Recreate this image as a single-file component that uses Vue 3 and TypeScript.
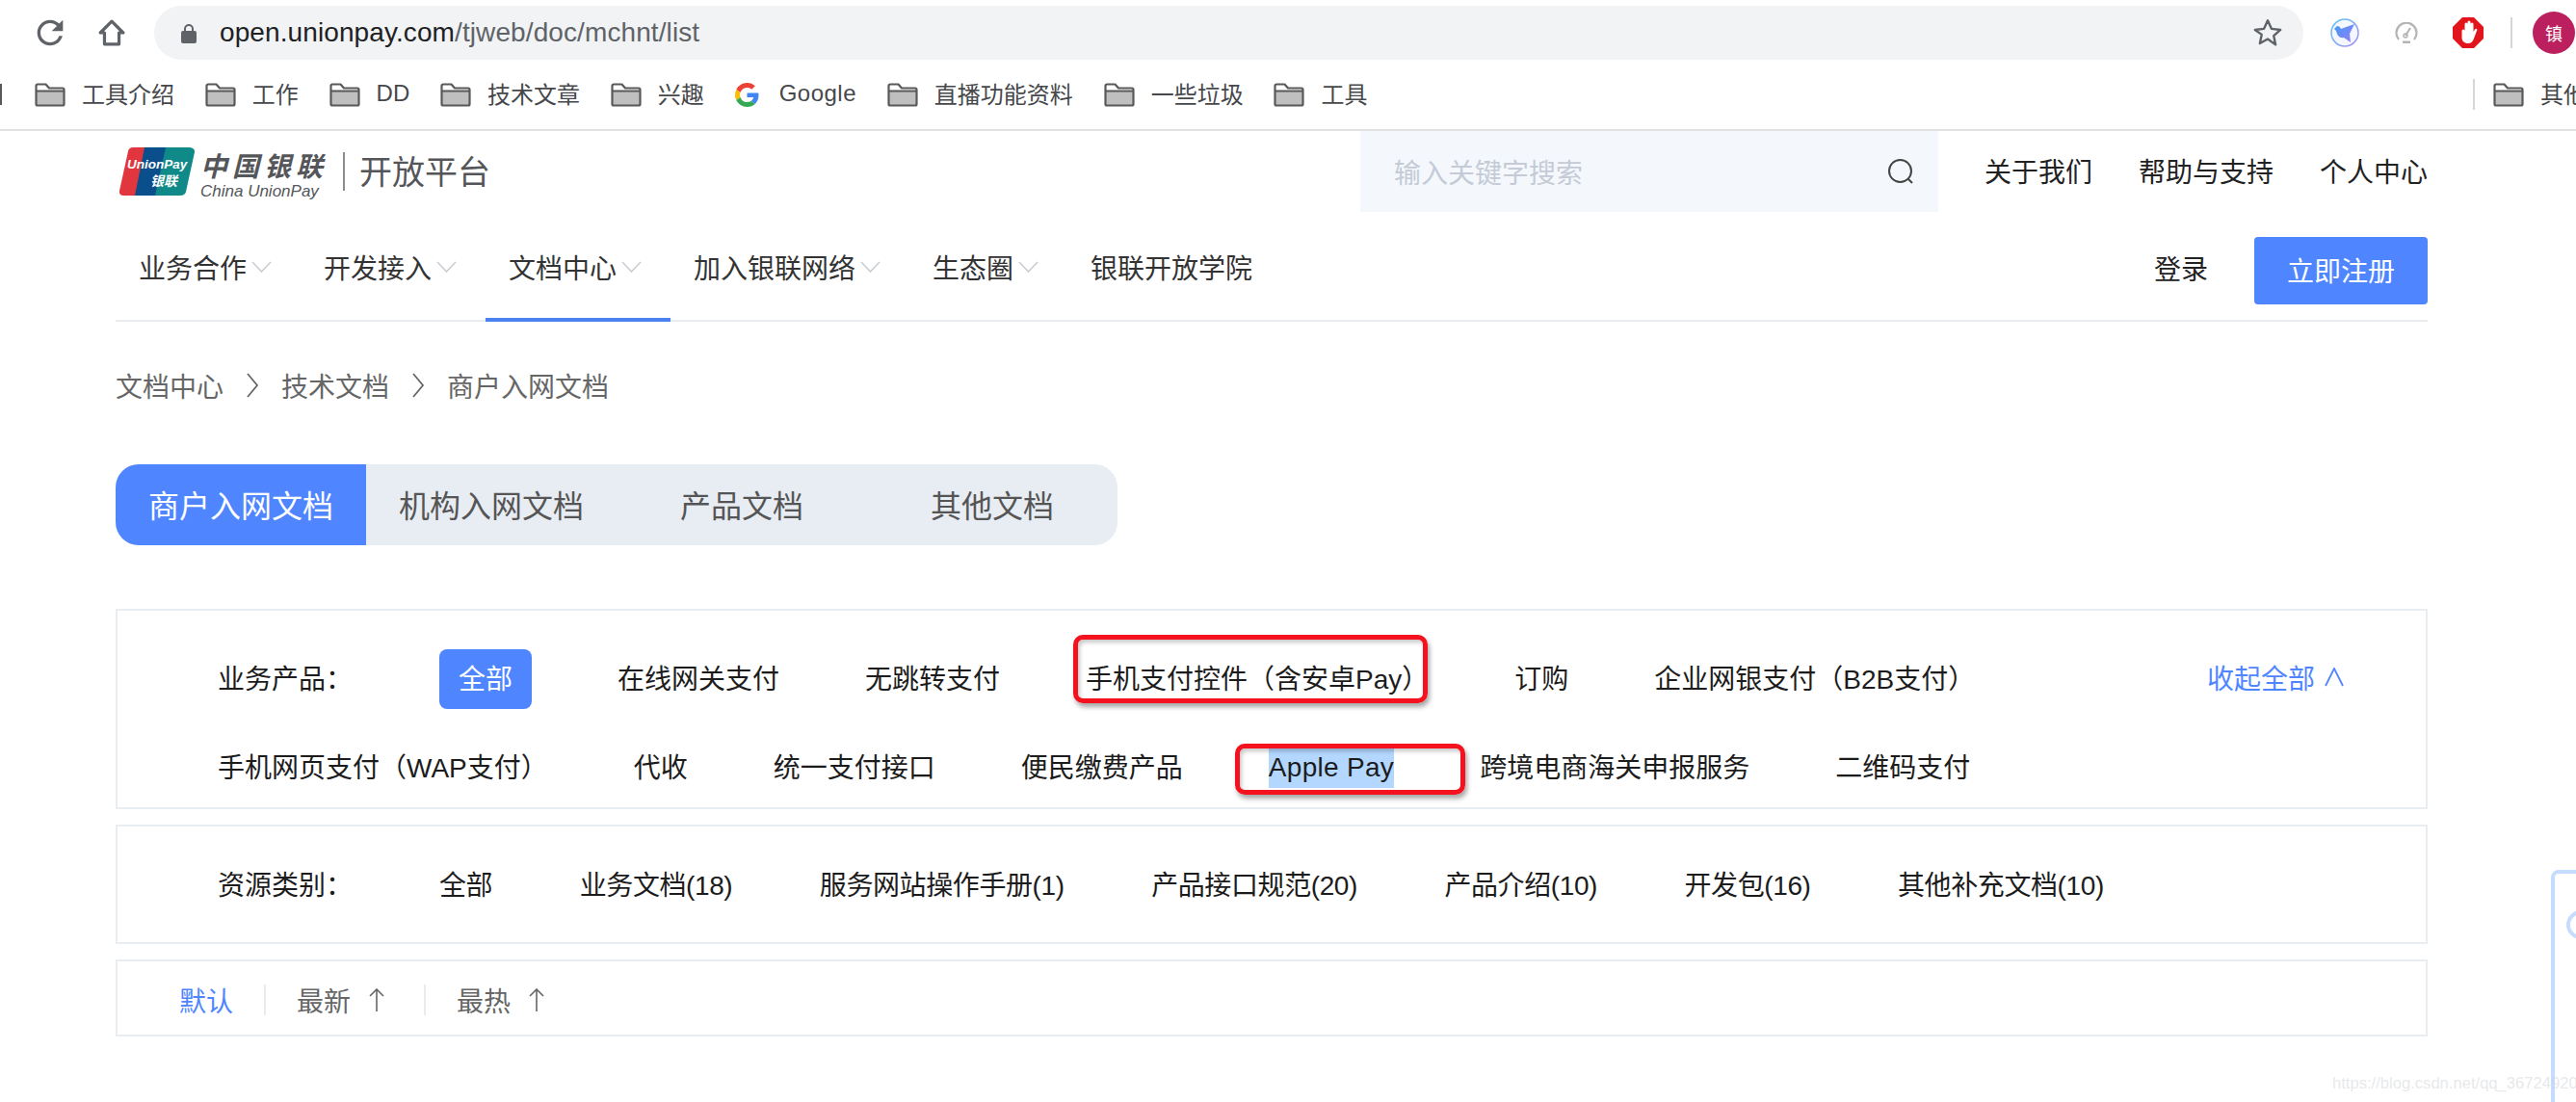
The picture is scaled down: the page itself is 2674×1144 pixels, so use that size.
<script setup lang="ts">
interface Bookmark {
  label: string
  kind: 'folder' | 'google'
}

interface NavItem {
  label: string
  active?: boolean
  arrow?: boolean
}

const bookmarks: Bookmark[] = [
  { label: '工具介绍', kind: 'folder' },
  { label: '工作', kind: 'folder' },
  { label: 'DD', kind: 'folder' },
  { label: '技术文章', kind: 'folder' },
  { label: '兴趣', kind: 'folder' },
  { label: 'Google', kind: 'google' },
  { label: '直播功能资料', kind: 'folder' },
  { label: '一些垃圾', kind: 'folder' },
  { label: '工具', kind: 'folder' },
]

const navItems: NavItem[] = [
  { label: '业务合作', arrow: true },
  { label: '开发接入', arrow: true },
  { label: '文档中心', arrow: true, active: true },
  { label: '加入银联网络', arrow: true },
  { label: '生态圈', arrow: true },
  { label: '银联开放学院' },
]

const tabs = ['商户入网文档', '机构入网文档', '产品文档', '其他文档']

const resourceTypes = [
  '全部',
  '业务文档(18)',
  '服务网站操作手册(1)',
  '产品接口规范(20)',
  '产品介绍(10)',
  '开发包(16)',
  '其他补充文档(10)',
]
</script>

<template>
  <div class="page">
    <!-- browser chrome -->
    <div class="chrome">
      <div class="toolbar">
        <svg class="back" viewBox="0 0 30 30"><path d="M28 15H4M14 5 4 15l10 10" fill="none" stroke="#5f6368" stroke-width="3" /></svg>
        <svg class="reload" viewBox="0 0 24 24"><path fill="#5f6368" d="M17.65 6.35A7.958 7.958 0 0012 4c-4.42 0-7.99 3.58-7.99 8s3.57 8 7.99 8c3.73 0 6.84-2.55 7.73-6h-2.08A5.99 5.99 0 0112 18c-3.31 0-6-2.69-6-6s2.69-6 6-6c1.66 0 3.14.69 4.22 1.78L13 11h7V4l-2.35 2.35z" /></svg>
        <svg class="home" viewBox="0 0 26 26"><path d="M13 2 24 13H20V24H6V13H2Z" fill="none" stroke="#5f6368" stroke-width="3" stroke-linejoin="round" /></svg>
        <div class="omnibox">
          <svg class="lock" viewBox="0 0 16 21">
            <path d="M4 9V6a4 4 0 0 1 8 0v3" fill="none" stroke="#5f6368" stroke-width="2" />
            <rect x="0" y="8" width="16" height="13" rx="2" fill="#5f6368" />
          </svg>
          <span class="url"><span class="host">open.unionpay.com</span>/tjweb/doc/mchnt/list</span>
          <svg class="star" viewBox="0 0 24 24"><path d="M12 2.5l2.9 6.4 7 .8-5.2 4.7 1.4 6.9L12 16.9l-6.1 3.4 1.4-6.9L2.100 9.700l7-.8z" fill="none" stroke="#5f6368" stroke-width="1.800" stroke-linejoin="round" /></svg>
        </div>
        <svg class="ext-bird" viewBox="0 0 30 30">
          <defs>
            <linearGradient id="birdRing" x1="0" y1="0" x2="1" y2="1">
              <stop offset="0" stop-color="#5cc8f5" />
              <stop offset="1" stop-color="#a58cf5" />
            </linearGradient>
            <linearGradient id="birdBody" x1="0" y1="0" x2="1" y2="1">
              <stop offset="0" stop-color="#3f9bf5" />
              <stop offset="1" stop-color="#9a7cf5" />
            </linearGradient>
          </defs>
          <circle cx="15" cy="15" r="14" fill="#f4f8fe" stroke="url(#birdRing)" stroke-width="1.500" />
          <path d="M7 8c2 0 3 1 4 3l14-5-5 10 1 9-7-5c-4 1-7-2-8-7L4 11z" fill="url(#birdBody)" />
        </svg>
        <svg class="ext-gauge" viewBox="0 0 24 22">
          <path d="M4 18a10.500 10.500 0 1 1 16 0" fill="none" stroke="#b4b4b4" stroke-width="2.200" />
          <path d="M11 14 16 6" stroke="#b4b4b4" stroke-width="2" />
          <circle cx="11" cy="14" r="2" fill="none" stroke="#b4b4b4" stroke-width="1.500" />
          <rect x="8" y="19.500" width="8" height="2.500" fill="#b4b4b4" />
        </svg>
        <svg class="ext-stop" viewBox="0 0 32 32">
          <path d="M10 0H22L32 10V22L22 32H10L0 22V10Z" fill="#e2141c" />
          <path d="M9.500 14a1.500 1.500 0 0 1 3 0v-7a1.500 1.500 0 0 1 3 0V5a1.500 1.500 0 0 1 3 0v2a1.500 1.500 0 0 1 3 0v8l1.500-2.500c1-1.500 3-.5 2.200 1L22 22c-1 3-3 5-6 5-4 0-6.500-2.500-6.500-6z" fill="#fff" />
        </svg>
        <div class="tool-sep"></div>
        <div class="avatar">镇</div>
      </div>

      <div class="bookmarks">
        <div class="bm-list">
          <div class="bm-stub"></div>
          <div v-for="b in bookmarks" :key="b.label" class="bm" :class="{ 'bm-google': b.kind === 'google' }">
            <svg v-if="b.kind === 'google'" class="g-icon" viewBox="0 0 48 48">
              <path fill="#EA4335" d="M24 9.500c3.540 0 6.710 1.220 9.210 3.600l6.850-6.850C35.900 2.380 30.470 0 24 0 14.620 0 6.510 5.380 2.560 13.220l7.980 6.190C12.430 13.720 17.740 9.500 24 9.500z" />
              <path fill="#4285F4" d="M46.980 24.550c0-1.570-.15-3.090-.38-4.550H24v9.020h12.940c-.58 2.960-2.260 5.480-4.780 7.180l7.730 6c4.510-4.180 7.090-10.360 7.090-17.650z" />
              <path fill="#FBBC05" d="M10.530 28.590c-.48-1.450-.76-2.990-.76-4.590s.27-3.140.76-4.590l-7.980-6.190C.92 16.460 0 20.120 0 24c0 3.880.92 7.540 2.560 10.780l7.970-6.190z" />
              <path fill="#34A853" d="M24 48c6.480 0 11.930-2.130 15.890-5.810l-7.730-6c-2.150 1.450-4.920 2.300-8.160 2.300-6.260 0-11.570-4.220-13.470-9.910l-7.980 6.190C6.510 42.620 14.620 48 24 48z" />
            </svg>
            <svg v-else class="folder" viewBox="0 0 32 25">
              <path d="M1.500 8.500H30.500V22A1.500 1.500 0 0 1 29 23.500H3A1.500 1.500 0 0 1 1.500 22Z" fill="#bfbfbf" />
              <path d="M1.500 3A1.500 1.500 0 0 1 3 1.500H11.500L15 5.500H29A1.500 1.500 0 0 1 30.500 7V22A1.500 1.500 0 0 1 29 23.500H3A1.500 1.500 0 0 1 1.500 22ZM1.500 8.500H30.500" fill="none" stroke="#58595b" stroke-width="2.200" stroke-linejoin="round" />
            </svg>
            <span class="bm-text">{{ b.label }}</span>
          </div>
        </div>
        <div class="bm-sep"></div>
        <div class="bm">
          <svg class="folder" viewBox="0 0 32 25">
            <path d="M1.500 8.500H30.500V22A1.500 1.500 0 0 1 29 23.500H3A1.500 1.500 0 0 1 1.500 22Z" fill="#bfbfbf" />
            <path d="M1.500 3A1.500 1.500 0 0 1 3 1.500H11.500L15 5.500H29A1.500 1.500 0 0 1 30.500 7V22A1.500 1.500 0 0 1 29 23.500H3A1.500 1.500 0 0 1 1.500 22ZM1.500 8.500H30.500" fill="none" stroke="#58595b" stroke-width="2.200" stroke-linejoin="round" />
          </svg>
          <span class="bm-text">其他书签</span>
        </div>
      </div>
    </div>

    <!-- site -->
    <div class="site">
      <header class="top-row">
        <div class="logo">
          <svg class="logo-card" viewBox="0 0 78 50">
            <path d="M14 0H40L30 50H4C1 50-.5 48 0 45L9 4C9.500 1.500 11.500 0 14 0Z" fill="#e2363f" />
            <path d="M26 0H60L50 50H16Z" fill="#0b4e8c" />
            <path d="M48 0H72C76 0 78.500 2 78 5L69 46C68.500 48.500 66 50 63 50H37Z" fill="#0f8a88" />
            <text x="8" y="22" class="card-en">UnionPay</text>
            <text x="32" y="40" class="card-cn">银联</text>
          </svg>
          <div class="logo-words">
            <span class="logo-cn">中国银联</span>
            <span class="logo-en">China UnionPay</span>
          </div>
          <div class="logo-sep"></div>
          <span class="logo-title">开放平台</span>
        </div>
        <div class="top-right">
          <div class="search">
            <span class="placeholder">输入关键字搜索</span>
            <svg class="search-icon" viewBox="0 0 28 28">
              <circle cx="13.500" cy="13.500" r="11.500" fill="none" stroke="#444" stroke-width="2" />
              <path d="M21.500 21.500 26 26" stroke="#444" stroke-width="2" />
            </svg>
          </div>
          <a class="top-link">关于我们</a>
          <a class="top-link">帮助与支持</a>
          <a class="top-link">个人中心</a>
        </div>
      </header>

      <nav class="nav">
        <div v-for="n in navItems" :key="n.label" class="nav-item" :class="{ active: n.active, plain: !n.arrow }">
          <span>{{ n.label }}</span>
          <svg v-if="n.arrow" class="nav-arrow" viewBox="0 0 21 12"><path d="M1 1 10.500 11 20 1" fill="none" stroke="#c9cdd2" stroke-width="1.600" /></svg>
        </div>
        <div class="nav-right">
          <span class="login">登录</span>
          <button class="register">立即注册</button>
        </div>
      </nav>

      <div class="crumbs">
        <span>文档中心</span>
        <svg class="crumb-arrow" viewBox="0 0 14 26"><path d="M2 1 12 13 2 25" fill="none" stroke="#666" stroke-width="1.800" /></svg>
        <span>技术文档</span>
        <svg class="crumb-arrow" viewBox="0 0 14 26"><path d="M2 1 12 13 2 25" fill="none" stroke="#666" stroke-width="1.800" /></svg>
        <span>商户入网文档</span>
      </div>

      <div class="tabs">
        <div v-for="(t, i) in tabs" :key="t" class="tab" :class="{ on: i === 0 }">{{ t }}</div>
      </div>

      <section class="card card-products">
        <div class="row">
          <span class="row-label">业务产品：</span>
          <span class="chip">全部</span>
          <span>在线网关支付</span>
          <span>无跳转支付</span>
          <span class="marked">
            手机支付控件（含安卓Pay）
            <i class="annot annot-a"></i>
          </span>
          <span>订购</span>
          <span>企业网银支付（B2B支付）</span>
          <span class="collapse">
            收起全部
            <svg class="collapse-arrow" viewBox="0 0 20 20"><path d="M1 19 10 1 19 19" fill="none" stroke="#4f86ff" stroke-width="1.800" /></svg>
          </span>
        </div>
        <div class="row">
          <span>手机网页支付（WAP支付）</span>
          <span>代收</span>
          <span>统一支付接口</span>
          <span>便民缴费产品</span>
          <span class="marked marked-flat">
            <span class="selected">Apple Pay</span>
            <i class="annot annot-b"></i>
          </span>
          <span>跨境电商海关申报服务</span>
          <span>二维码支付</span>
        </div>
      </section>

      <section class="card card-types">
        <span class="row-label">资源类别：</span>
        <span v-for="r in resourceTypes" :key="r">{{ r }}</span>
      </section>

      <section class="card card-sort">
        <span class="sort-on">默认</span>
        <i class="sort-sep"></i>
        <span class="sort-item">最新
          <svg class="sort-arrow" viewBox="0 0 18 24"><path d="M9 24V1M2 8 9 1l7 7" fill="none" stroke="#666" stroke-width="1.600" /></svg>
        </span>
        <i class="sort-sep"></i>
        <span class="sort-item">最热
          <svg class="sort-arrow" viewBox="0 0 18 24"><path d="M9 24V1M2 8 9 1l7 7" fill="none" stroke="#666" stroke-width="1.600" /></svg>
        </span>
      </section>
    </div>

    <!-- floating service widget, cut by the window edge -->
    <div class="float-widget"><i class="float-ring"></i></div>
    <div class="watermark">https://blog.csdn.net/qq_36724920</div>
  </div>
</template>

<style>
html,
body {
  margin: 0;
  background: #fff;
}
</style>

<style scoped>
.page {
  position: relative;
  width: 2674px;
  height: 1144px;
  overflow: hidden;
  background: #fff;
  color: #1c1c1c;
  font-family: "Liberation Sans", "Noto Sans CJK SC", sans-serif;
  font-size: 28px;
}

/* browser chrome */
.chrome {
  height: 136px;
  box-sizing: border-box;
  border-bottom: 2px solid #dfe1e3;
}
.toolbar {
  display: flex;
  align-items: center;
  height: 68px;
}
.back {
  width: 30px;
  height: 30px;
  margin-left: -28px;
  flex: none;
}
.reload {
  width: 40px;
  height: 40px;
  margin-left: 30px;
  flex: none;
}
.home {
  width: 28px;
  height: 28px;
  margin-left: 30px;
  flex: none;
}
.omnibox {
  display: flex;
  align-items: center;
  width: 2231px;
  height: 56px;
  margin-left: 30px;
  padding: 0 21px 0 28px;
  box-sizing: border-box;
  flex: none;
  background: #f1f3f4;
  border-radius: 28px;
}
.lock {
  width: 16px;
  height: 21px;
  margin-right: 24px;
  flex: none;
}
.url {
  flex: 1;
  color: #5f6368;
  font-size: 28px;
  letter-spacing: 0.1px;
}
.host {
  color: #202124;
}
.star {
  width: 32px;
  height: 32px;
  flex: none;
}
.ext-bird {
  width: 30px;
  height: 30px;
  margin-left: 28px;
  flex: none;
}
.ext-gauge {
  width: 24px;
  height: 22px;
  margin-left: 37px;
  flex: none;
}
.ext-stop {
  width: 32px;
  height: 32px;
  margin-left: 36px;
  flex: none;
}
.tool-sep {
  width: 2px;
  height: 32px;
  margin-left: 28px;
  background: #d5d6d8;
  flex: none;
}
.avatar {
  display: flex;
  align-items: center;
  justify-content: center;
  width: 44px;
  height: 44px;
  margin-left: 21px;
  border-radius: 50%;
  background: #bc1f5d;
  color: #fff;
  font-size: 18px;
  flex: none;
}

.bookmarks {
  display: flex;
  align-items: center;
  height: 60px;
  color: #46484b;
  font-size: 24px;
}
.bm-list {
  display: flex;
  align-items: center;
  width: 2567px;
  flex: none;
}
.bm-stub {
  width: 2px;
  height: 22px;
  margin-right: 34px;
  background: #58595b;
}
.bm {
  display: flex;
  align-items: center;
  gap: 17px;
  margin-right: 31.800px;
  white-space: nowrap;
  flex: none;
}
.bm-text {
  padding-bottom: 3px;
}
.bm-google {
  gap: 21px;
  letter-spacing: 0.5px;
}
.folder {
  width: 32px;
  height: 25px;
  flex: none;
}
.g-icon {
  width: 25px;
  height: 25px;
  flex: none;
}
.bm-sep {
  width: 2px;
  height: 32px;
  margin-right: 19px;
  background: #d5d6d8;
  flex: none;
}

/* site header */
.site {
  width: 2400px;
  margin-left: 120px;
}
.top-row {
  display: flex;
  align-items: center;
  justify-content: space-between;
  height: 84px;
}
.logo {
  display: flex;
  align-items: center;
  margin-left: 4px;
  color: #55565a;
}
.logo-card {
  width: 78px;
  height: 50px;
  flex: none;
}
.card-en {
  fill: #fff;
  font-size: 13.500px;
  font-weight: 700;
  font-style: italic;
}
.card-cn {
  fill: #fff;
  font-size: 14px;
  font-weight: 700;
  font-style: italic;
}
.logo-words {
  display: flex;
  flex-direction: column;
  margin-top: 12px;
  margin-left: 6px;
}
.logo-cn {
  height: 30px;
  font-size: 28px;
  font-weight: 700;
  font-style: italic;
  line-height: 30px;
  letter-spacing: 5px;
}
.logo-en {
  height: 20px;
  font-size: 17px;
  font-style: italic;
  line-height: 20px;
  white-space: nowrap;
}
.logo-sep {
  width: 2px;
  height: 40px;
  margin-left: 16px;
  background: #8c8d90;
}
.logo-title {
  margin-left: 15px;
  padding-top: 2px;
  font-size: 34px;
  line-height: 40px;
}
.top-right {
  display: flex;
  align-items: center;
  gap: 48px;
}
.search {
  display: flex;
  align-items: center;
  justify-content: space-between;
  width: 600px;
  height: 84px;
  padding: 0 25px 0 35px;
  box-sizing: border-box;
  background: #f4f8fd;
}
.placeholder {
  color: #c4cbd6;
}
.search-icon {
  width: 28px;
  height: 28px;
}
.top-link {
  padding-bottom: 3px;
  color: #222;
  white-space: nowrap;
}

/* nav */
.nav {
  display: flex;
  height: 114px;
  box-sizing: border-box;
  border-bottom: 2px solid #eaeef2;
}
.nav-item {
  display: flex;
  align-items: center;
  gap: 5px;
  box-sizing: border-box;
  height: 114px;
  padding: 8px 30px 4px 24px;
  border-bottom: 4px solid transparent;
  color: #333;
  white-space: nowrap;
}
.nav-item.active {
  border-bottom-color: #4a80f0;
}
.nav-arrow {
  width: 21px;
  height: 12px;
}
.nav-right {
  display: flex;
  align-items: center;
  gap: 48px;
  height: 112px;
  margin-left: auto;
  padding-top: 10px;
  box-sizing: border-box;
}
.login {
  margin-bottom: 6px;
  color: #222;
}
.register {
  width: 180px;
  height: 70px;
  padding: 0 0 3px;
  border: 0;
  border-radius: 4px;
  background: #4f86ff;
  color: #fff;
  font-family: inherit;
  font-size: 28px;
}

/* breadcrumb and tabs */
.crumbs {
  display: flex;
  align-items: center;
  gap: 23px;
  height: 40px;
  margin-top: 46px;
  color: #666;
}
.crumb-arrow {
  width: 14px;
  height: 26px;
}
.tabs {
  display: flex;
  width: 1040px;
  height: 84px;
  margin-top: 62px;
  overflow: hidden;
  border-radius: 24px;
  background: #e8ecf3;
}
.tab {
  display: flex;
  align-items: center;
  justify-content: center;
  box-sizing: border-box;
  width: 260px;
  padding-bottom: 3px;
  color: #555;
  font-size: 32px;
}
.tab.on {
  background: #4f86ff;
  color: #fff;
}

/* filter cards */
.card {
  box-sizing: border-box;
  border: 2px solid #e8edf1;
}
.card-products {
  height: 208px;
  margin-top: 66px;
  padding: 40px 85px 0 104px;
}
.row {
  display: flex;
  align-items: center;
  gap: 89px;
  height: 62px;
  white-space: nowrap;
}
.row + .row {
  margin-top: 30px;
}
.row > span {
  padding-bottom: 4px;
}
.row-label {
  width: 141px;
  flex: none;
}
.row > .chip {
  display: flex;
  align-items: center;
  box-sizing: border-box;
  height: 62px;
  padding: 0 20px 4px;
  border-radius: 8px;
  background: #4f86ff;
  color: #fff;
}
.marked {
  position: relative;
  display: inline-flex;
  align-items: center;
}
.row > .marked-flat {
  padding-bottom: 0;
}
.selected {
  display: block;
  height: 41px;
  background: #b3d7ff;
  line-height: 39px;
  letter-spacing: 0.3px;
}
.annot {
  position: absolute;
  box-sizing: border-box;
  border: 5px solid #f5121f;
  border-radius: 10px;
  box-shadow: 2px 4px 5px rgba(0, 0, 0, 0.35), inset 2px 3px 4px rgba(0, 0, 0, 0.22);
  pointer-events: none;
}
.annot-a {
  top: -24px;
  left: -13px;
  width: 368px;
  height: 71px;
}
.annot-b {
  top: -5px;
  left: -35px;
  width: 239px;
  height: 53px;
}
.collapse {
  display: flex;
  align-items: center;
  gap: 10px;
  margin-left: auto;
  color: #4f86ff;
}
.collapse-arrow {
  width: 20px;
  height: 20px;
}
.card-types {
  display: flex;
  align-items: center;
  gap: 90.500px;
  height: 124px;
  margin-top: 16px;
  padding: 0 0 3px 104px;
  letter-spacing: -0.4px;
  white-space: nowrap;
}
.card-types .row-label {
  width: 140px;
  margin-right: -0.5px;
  letter-spacing: 0;
}
.card-sort {
  display: flex;
  align-items: center;
  height: 80px;
  margin-top: 16px;
  padding: 4px 0 0 64px;
  color: #666;
}
.sort-on {
  color: #4f86ff;
}
.sort-sep {
  width: 2px;
  height: 32px;
  margin: 0 32px;
  background: #e8ecf0;
}
.sort-item {
  display: flex;
  align-items: center;
  gap: 18px;
}
.sort-item + .sort-sep {
  margin-left: 40px;
}
.sort-arrow {
  width: 18px;
  height: 24px;
}

.float-widget {
  position: absolute;
  top: 903px;
  left: 2648px;
  width: 60px;
  height: 300px;
  box-sizing: border-box;
  border: 4px solid #c6dcff;
  border-radius: 8px;
}
.float-ring {
  position: absolute;
  top: 38px;
  left: 12px;
  width: 30px;
  height: 30px;
  box-sizing: border-box;
  border: 4px solid #c6dcff;
  border-radius: 50%;
}
.watermark {
  position: absolute;
  top: 1114px;
  left: 2421px;
  color: rgba(200, 204, 208, 0.45);
  font-size: 16.600px;
  line-height: 22px;
  white-space: nowrap;
}
</style>
